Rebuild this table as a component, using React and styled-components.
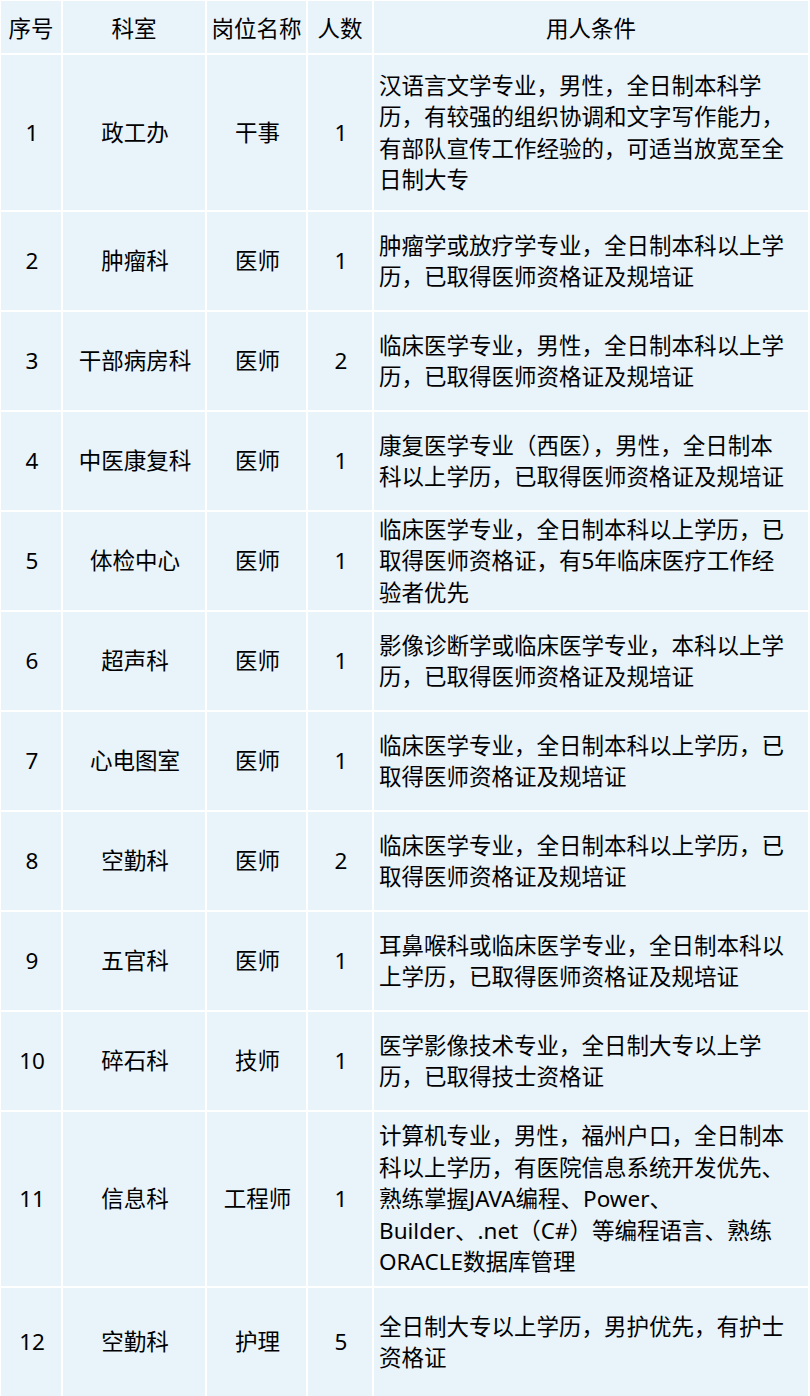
import React from "react";
import styled, { createGlobalStyle } from "styled-components";

const GlobalStyle = createGlobalStyle`
  html, body {
    margin: 0;
    padding: 0;
    background: #fff;
  }
  body {
    font-family: "Noto Sans", "Noto Sans CJK SC", sans-serif;
  }
`;

const Table = styled.div`
  display: grid;
  grid-template-columns: 60px 142px 99px 64px 434px;
  grid-template-rows: 52px 155px repeat(9, 98px) 174px 108px;
  gap: 2px;
  padding: 1px 2px 0 1px;
  width: 810px;
  box-sizing: border-box;
  background: #fff;
`;

const Cell = styled.div`
  display: flex;
  align-items: center;
  justify-content: ${p => (p.$left ? "flex-start" : "center")};
  text-align: ${p => (p.$left ? "left" : "center")};
  padding: ${p => (p.$left ? "0 17px 0 5px" : p.$head ? "3px 0 0 0" : "0 0 0 2px")};
  background: #e9f3fa;
  color: #000;
  font-size: 22.5px;
  line-height: 31.5px;
  white-space: ${p => (p.$left ? "normal" : "nowrap")};
  overflow: hidden;
`;

const Text = styled.span`
  display: block;
  width: 100%;
`;

const headers = ["序号", "科室", "岗位名称", "人数", "用人条件"];

const rows = [
  ["1", "政工办", "干事", "1", "汉语言文学专业，男性，全日制本科学历，有较强的组织协调和文字写作能力，有部队宣传工作经验的，可适当放宽至全日制大专"],
  ["2", "肿瘤科", "医师", "1", "肿瘤学或放疗学专业，全日制本科以上学历，已取得医师资格证及规培证"],
  ["3", "干部病房科", "医师", "2", "临床医学专业，男性，全日制本科以上学历，已取得医师资格证及规培证"],
  ["4", "中医康复科", "医师", "1", "康复医学专业（西医），男性，全日制本科以上学历，已取得医师资格证及规培证"],
  ["5", "体检中心", "医师", "1", "临床医学专业，全日制本科以上学历，已取得医师资格证，有5年临床医疗工作经验者优先"],
  ["6", "超声科", "医师", "1", "影像诊断学或临床医学专业，本科以上学历，已取得医师资格证及规培证"],
  ["7", "心电图室", "医师", "1", "临床医学专业，全日制本科以上学历，已取得医师资格证及规培证"],
  ["8", "空勤科", "医师", "2", "临床医学专业，全日制本科以上学历，已取得医师资格证及规培证"],
  ["9", "五官科", "医师", "1", "耳鼻喉科或临床医学专业，全日制本科以上学历，已取得医师资格证及规培证"],
  ["10", "碎石科", "技师", "1", "医学影像技术专业，全日制大专以上学历，已取得技士资格证"],
  ["11", "信息科", "工程师", "1", "计算机专业，男性，福州户口，全日制本科以上学历，有医院信息系统开发优先、熟练掌握JAVA编程、Power、Builder、.net（C#）等编程语言、熟练ORACLE数据库管理"],
  ["12", "空勤科", "护理", "5", "全日制大专以上学历，男护优先，有护士资格证"],
];

export default function App() {
  return (
    <>
      <GlobalStyle />
      <Table lang="zh-CN">
        {headers.map(h => (
          <Cell key={h} $head>{h}</Cell>
        ))}
        {rows.map(r =>
          r.map((v, i) =>
            i === 4 ? (
              <Cell key={r[0] + "-" + i} $left>
                <Text>{v}</Text>
              </Cell>
            ) : (
              <Cell key={r[0] + "-" + i}>{v}</Cell>
            )
          )
        )}
      </Table>
    </>
  );
}
